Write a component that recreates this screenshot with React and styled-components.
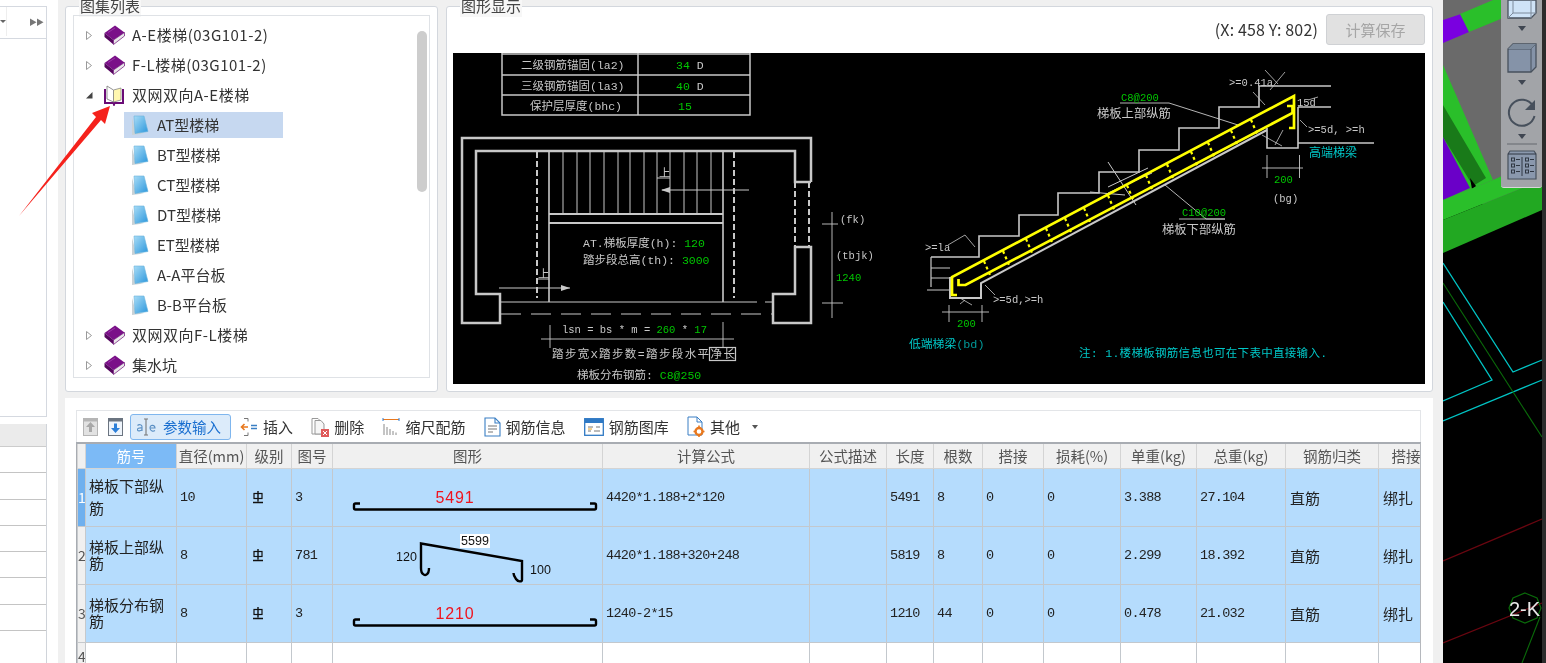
import React from "react";
import styled, { createGlobalStyle } from "styled-components";

const Global = createGlobalStyle`
  html, body { margin: 0; padding: 0; width: 1546px; height: 663px; overflow: hidden; background: #f0f0f0; }
  * { box-sizing: border-box; }
`;

const UI = `"Noto Sans CJK SC", "Liberation Sans", sans-serif`;
const CAD = `"Liberation Mono", "Noto Sans CJK SC", monospace`;

const Page = styled.div`
  position: relative; width: 1546px; height: 663px; display: flex; overflow: hidden;
  font-family: ${UI}; color: #333; background: #f0f0f0; filter: blur(0.4px);
`;

/* left strip */
const Strip = styled.aside`
  width: 58px; flex: none; background: #fff; padding-top: 6px; display: flex; flex-direction: column;
`;
const StripBar = styled.div`
  width: 47px; height: 33px; flex: none; border: 1px solid #d5d9e0; border-left: 0; display: flex; align-items: center; padding-bottom: 2px;
`;
const StripCaret = styled.span`
  width: 7px; height: 100%; border-right: 1px solid #eee; display: flex; align-items: center;
  &::before { content: ""; border: 3px solid transparent; border-top: 3px solid #666; margin: 3px 0 0 0; }
`;
const StripArrows = styled.span`
  margin-left: auto; margin-right: 3px; font-size: 8px; letter-spacing: -1px; color: #777; line-height: 1;
`;
const StripTree = styled.div`
  width: 47px; height: 378px; flex: none; border: 1px solid #d5d9e0; border-left: 0; border-top: 0;
`;
const StripGrid = styled.div`
  width: 47px; flex: 1; margin-top: 7px; border-right: 1px solid #d0d4da; display: flex; flex-direction: column;
`;
const StripHead = styled.div`height: 23px; flex: none; background: #ebebeb; border-bottom: 1px solid #ccc;`;
const StripRow = styled.div`height: 26.3px; flex: none; border-bottom: 1.5px solid #c4c4c4;`;

/* dialog */
const Main = styled.main`
  width: 1385px; flex: none; padding: 6px 10px 0 7px; display: flex; flex-direction: column; gap: 6px;
`;
const TopRow = styled.div`height: 386px; flex: none; display: flex; gap: 8px;`;
const Group = styled.section`
  position: relative; background: #fff; border: 1px solid #d3d7dd; border-radius: 3px;
  width: ${p => p.$width || "auto"}; flex: ${p => (p.$width ? "none" : 1)};
  display: flex; flex-direction: column;
`;
const Legend = styled.h3`
  position: absolute; top: -12px; left: 13px; margin: 0; padding: 0 1px; background: #f7f7f7;
  font-size: 15px; font-weight: 400; line-height: 22px; color: #444;
`;
const TreeBox = styled.div`
  position: relative; margin: 8px 7px 13px; flex: 1; border: 1px solid #dfe2e6; padding-top: 4px; overflow: hidden;
`;
const TreeRow = styled.div`
  height: 30px; display: flex; align-items: center; padding-left: ${p => (p.$child ? "50px" : "11px")};
`;
const CaretSlot = styled.span`width: 19px; flex: none; display: flex; align-items: center;`;
const IconSlot = styled.span`width: ${p => p.$w}px; flex: none; display: flex; align-items: center;`;
const TreeLabel = styled.span`
  font-size: 15px; line-height: 26px; color: #333; white-space: nowrap; letter-spacing: ${p => (p.$wide ? "0.5px" : "0")};
`;
const ChildPill = styled.div`
  width: 159px; height: 26px; display: flex; align-items: center; padding-left: 7px;
  background: ${p => (p.$on ? "#c6d8f0" : "transparent")};
`;
const Thumb = styled.div`
  position: absolute; right: 2px; top: 15px; width: 10px; height: 161px; border-radius: 5px; background: #cdcdcd;
`;

const CoordBar = styled.div`
  height: 46px; flex: none; display: flex; align-items: center; justify-content: flex-end; gap: 8px; padding: 0 7px 2px 0;
`;
const Coord = styled.span`font-size: 16px; letter-spacing: 0.15px; color: #333; white-space: nowrap;`;
const SaveBtn = styled.button`
  width: 99px; height: 31px; background: #e1e1e1; border: 1px solid #cfd1d4; border-radius: 3px; padding: 0;
  font: 400 15px ${UI}; color: #a6a6a6;
`;
const Canvas = styled.svg`
  display: block; width: 972px; height: 331px; margin-left: 6px; flex: none; background: #000;
`;
const CadLabel = styled.text`
  font-family: ${CAD}; font-size: ${p => p.$size || 11.5}px; fill: ${p => p.$c || "#c8c8c8"};
`;

/* lower panel */
const Lower = styled.section`
  flex: 1; min-height: 0; background: #fff; padding: 12px 12px 0 11px; display: flex; flex-direction: column;
`;
const Toolbar = styled.div`
  height: 32px; flex: none; border: 1px solid #e3e5e8; border-bottom: 0; display: flex; align-items: center; gap: 18.2px; padding-left: 6px;
`;
const Nav = styled.div`display: flex; align-items: center; gap: 10px; margin-right: -11.2px;`;
const ActiveBtn = styled.div`
  width: 101px; height: 26px; display: flex; align-items: center; gap: 7px; padding-left: 5px; margin-right: -9.2px;
  background: #dcebfa; border: 1px solid #7fb6ee; border-radius: 3px;
  font-size: 14.5px; color: #1a6fd0;
`;
const ToolItem = styled.div`
  display: flex; align-items: center; gap: 5px; font-size: 15px; color: #333; white-space: nowrap;
`;
const DownTri = styled.span`
  width: 0; height: 0; margin-left: 7px; border: 3px solid transparent; border-top: 4px solid #555; margin-top: 4px;
`;

const GridWrap = styled.div`
  flex: 1; min-height: 0; overflow: hidden; border-top: 2px solid #a8acb2; border-left: 1px solid #a8acb2; border-right: 1px solid #b5b8bd;
`;
const Table = styled.table`
  table-layout: fixed; width: 1385px; border-collapse: collapse;
`;
const Th = styled.th`
  height: 24px; padding: 0; overflow: hidden; white-space: nowrap; font-size: 14.5px; font-weight: 400; text-align: center;
  color: ${p => (p.$on ? "#fff" : "#555")}; background: ${p => (p.$on ? "#7cbaf6" : "#f0f0f0")};
  border: 1px solid #d4d4d4; border-top: 0;
`;
const Tr = styled.tr`height: ${p => p.$h}px; background: ${p => (p.$on ? "#b5dcfd" : "#fff")};`;
const RowHead = styled.td`
  padding: ${p => (p.$top ? "6px 0 0" : "0")}; vertical-align: ${p => (p.$top ? "top" : "middle")};
  text-align: center; font-size: 14px; line-height: 1; overflow: hidden;
  color: ${p => (p.$on ? "#fff" : "#555")}; background: ${p => (p.$on ? "#6fb0ee" : "#f0f0f0")};
  border: 1px solid #c6c9cc;
`;
const Td = styled.td`
  padding: 0 3px; border: 1px solid #c3c8cd; vertical-align: middle; white-space: nowrap; overflow: hidden;
  font-family: ${CAD}; font-size: 13.5px; letter-spacing: -0.7px; color: #222;
`;
const NameCell = styled(Td)`
  white-space: normal; font-family: ${UI}; font-size: 15px; letter-spacing: 0; line-height: ${p => (p.$tight ? "16px" : "22px")}; color: #222;
`;
const CnCell = styled(Td)`font-family: ${UI}; font-size: 15px; letter-spacing: 0; padding-left: 4px;`;
const ShapeCell = styled(Td)`padding: 0; letter-spacing: 0;`;

const ViewportWrap = styled.div`position: relative; width: 103px; flex: none; background: #000;`;
const ViewSvg = styled.svg`display: block; width: 103px; height: 663px;`;
const ViewBar = styled.div`
  position: absolute; left: 58px; top: 0; width: 41px; height: 188px; background: #a2a4a8;
  border-bottom: 1px solid #d8d8d8; border-radius: 0 0 3px 3px;
  display: flex; flex-direction: column; align-items: center;
`;
const ViewTri = styled.span`
  width: 0; flex: none; border: 4px solid transparent; border-top: 5px solid #3f4651; margin: 7px 0 0; height: 9px;
`;
const ViewSep = styled.span`width: 30px; height: 2px; background: #83868b; margin: 0 0 5px;`;
const ArrowOverlay = styled.svg`position: absolute; left: 0; top: 0; pointer-events: none;`;

/* ---------- icons ---------- */
const Closed = () => (
  <svg width="8" height="11" viewBox="0 0 8 11"><path d="M1.5 1.5 6.5 5.5 1.5 9.5Z" fill="#fff" stroke="#9a9a9a" /></svg>
);
const Opened = () => (
  <svg width="8" height="8" viewBox="0 0 8 8"><path d="M7.5 1V7.5H1Z" fill="#444" /></svg>
);
const Book = () => (
  <svg width="21" height="20" viewBox="0 0 21 20">
    <path d="M0.5 8 11 .5 20.5 7.5 9.5 15Z" fill="#7a1088" />
    <path d="M.5 8 .5 12 9.5 19.5 9.5 15Z" fill="#55065f" />
    <path d="M9.5 15 20.5 7.5 20.5 11 9.5 19.5Z" fill="#e8e8e8" stroke="#6a0c76" strokeWidth=".7" />
    <path d="M4 7.5 11 3" stroke="#9a38a8" />
  </svg>
);
const OpenBook = () => (
  <svg width="20" height="21" viewBox="0 0 20 21">
    <path d="M1 4V18H9.5L10 19.5 10.5 18H19V4" fill="none" stroke="#6a0c76" strokeWidth="2" />
    <path d="M3 1 9.5 5V17L3 14Z" fill="#fff" stroke="#777" strokeWidth=".8" />
    <path d="M9.5 5 17 3V15L9.5 17Z" fill="#fff7b0" stroke="#888" strokeWidth=".8" />
  </svg>
);
const Sheet = () => (
  <svg width="18" height="21" viewBox="0 0 18 21">
    <defs><linearGradient id="sh" x1="0" x2="1" y1="0" y2="1"><stop offset="0" stopColor="#a8dcf6" /><stop offset="1" stopColor="#2a96dc" /></linearGradient></defs>
    <path d="M1 3V20L13 18.5 5 17.5Z" fill="#c9d2d6" />
    <path d="M3 1H13L17 16.5 4 18.5Z" fill="url(#sh)" stroke="#6ab4dc" strokeWidth=".6" />
  </svg>
);
const Up = ({ down }) => (
  <svg width="15" height="18" viewBox="0 0 15 18">
    <rect x=".5" y=".5" width="14" height="17" fill={down ? "#eef4fb" : "#e2e2e2"} stroke={down ? "#6b7480" : "#b5b5b5"} />
    <rect x=".5" y=".5" width="14" height="3" fill={down ? "#6b7480" : "#b5b5b5"} />
    {down
      ? <path d="M7.5 15 3 10H6V5.5H9V10H12Z" fill="#2c7fd8" />
      : <path d="M7.5 4 12 9H9V14H6V9H3Z" fill="#a8a8a8" />}
  </svg>
);
const IconParam = () => (
  <svg width="20" height="20" viewBox="0 0 20 20" fill="none" stroke="#5a8fc4" strokeWidth="1.1">
    <path d="M1.5 8.5C3 7 6 7.500 6 9.5V14M6 11C3 10.500 1 11.500 1.500 13C2 14.500 5 14 6 12.500" />
    <path d="M8 2H12M10 2V18M8 18H12" stroke="#777" />
    <path d="M14 11H19C19 8 14 7 14 11C14 14.500 17.500 14.500 19 13.500" />
  </svg>
);
const IconInsert = () => (
  <svg width="18" height="20" viewBox="0 0 18 20" fill="none">
    <path d="M4 1.500H8V4.500M4 18.500H8V15.500" stroke="#777" />
    <path d="M8 10H1.500M4.500 7 1.500 10 4.500 13" stroke="#e8781e" strokeWidth="1.6" />
    <path d="M11 8.500H17M11 11.500H17" stroke="#3a7fc4" strokeWidth="1.4" />
  </svg>
);
const IconDelete = () => (
  <svg width="18" height="20" viewBox="0 0 18 20" fill="none">
    <path d="M1 1.500H7L11 5.500V17H1Z" fill="#fff" stroke="#999" />
    <path d="M4 3.500H10L13 7V17H4Z" fill="#f6f6f6" stroke="#999" />
    <rect x="10" y="12" width="8" height="8" fill="#e05a5a" />
    <path d="M12 14 16 18M16 14 12 18" stroke="#fff" />
  </svg>
);
const IconScale = () => (
  <svg width="18" height="20" viewBox="0 0 18 20" fill="none" stroke="#8a8a8a">
    <path d="M1 2.500H17" stroke="#e8781e" />
    <path d="M1 1V4M17 1V4" stroke="#2c7fd8" />
    <path d="M2 7V18M5 10V18M8 12V18M11 14V18M14 15.500V18" />
  </svg>
);
const IconInfo = () => (
  <svg width="17" height="20" viewBox="0 0 17 20" fill="none" stroke="#3a7fc4" strokeWidth="1.1">
    <path d="M1 1H11L16 6V19H1Z" />
    <path d="M11 1V6H16" />
    <path d="M4 9H13M4 12H13M4 15H9" stroke="#777" />
  </svg>
);
const IconLib = () => (
  <svg width="20" height="18" viewBox="0 0 20 18" fill="none">
    <rect x=".7" y=".7" width="18.600" height="16.600" stroke="#2f79c4" strokeWidth="1.300" />
    <rect x="1" y="1" width="18" height="4" fill="#2f79c4" />
    <path d="M4 9H9M4 13H7M12 9H16M10 13H16" stroke="#777" />
    <path d="M4 11H8" stroke="#e8a21e" />
  </svg>
);
const IconOther = () => (
  <svg width="18" height="21" viewBox="0 0 18 21" fill="none">
    <path d="M1 1H10L15 6V19H1Z" fill="#fff" stroke="#3a7fc4" />
    <path d="M10 1V6H15" stroke="#3a7fc4" />
    <circle cx="12" cy="15.500" r="3.500" stroke="#e8781e" strokeWidth="2.400" fill="#fff" />
    <path d="M12 9.500V11M12 20V21.500M6.500 15.500H8M16 15.500H17.500" stroke="#e8781e" strokeWidth="1.600" />
  </svg>
);
const Grade = () => (
  <svg width="12" height="14" viewBox="0 0 12 14" style={{ display: "block", marginLeft: 2 }} fill="none" stroke="#111">
    <rect x="2" y="3.500" width="8" height="5" strokeWidth="1.200" />
    <path d="M6 1V11.500M1 12.500H11" strokeWidth="1.400" />
  </svg>
);

/* ---------- rebar shapes ---------- */
const BarShape = ({ value }) => (
  <svg width="270" height="57" viewBox="0 0 270 57" style={{ display: "block" }}>
    <path d="M27 34.500H22.500Q21 34.500 21 36V39Q21 40.500 22.500 40.500H261.500Q263 40.500 263 39V36Q263 34.500 261.500 34.500H257" fill="none" stroke="#000" strokeWidth="2.400" />
    <text x="122" y="34" textAnchor="middle" fontFamily="Liberation Sans" fontSize="16" letterSpacing=".8" fill="#f0141e">{value}</text>
  </svg>
);
const BentShape = () => (
  <svg width="270" height="57" viewBox="0 0 270 57" style={{ display: "block" }}>
    <path d="M96 41C96 48 92 49 90 47 88.500 46 88 44 88 41V16.500L189 34V53C189 55 185 55 183 52 181.500 50 180.500 48 180.500 46" fill="none" stroke="#000" strokeWidth="2.400" />
    <rect x="127" y="7" width="30" height="14" fill="#fff" />
    <g fontFamily="Liberation Sans" fontSize="12.500" fill="#111">
      <text x="142" y="18" textAnchor="middle">5599</text>
      <text x="63" y="34">120</text>
      <text x="197" y="47">100</text>
    </g>
  </svg>
);

/* ---------- CAD drawing ---------- */
const G = "#00c800";
const C = "#00c8c8";
const W = "#c8c8c8";
const treadXs = [563, 577, 590, 604, 618, 630, 644, 657, 670, 684, 697, 711];

const slopeY = (x) => 277 + (x - 952) * (96 - 277) / (1294 - 952);
const slopeX = [984, 1003, 1026, 1046, 1065, 1084, 1108, 1127, 1146, 1167, 1191, 1208, 1231, 1251];

const PlanView = () => (
  <g>
    <g fill="none" stroke={W}>
      <path d="M502 53V115H750V53M502 54H750M502 75H750M502 95H750M638 53V115" strokeWidth="1.500" />
      <path d="M811 182V138H462V323H500V294H476V151H795V182H811" strokeWidth="2.500" />
      <path d="M811 247H795V294H773V323H811Z" strokeWidth="2.500" />
      <path d="M795 182V247M809 182V247M537 152V298M734 152V298" strokeWidth="2" strokeDasharray="6 3" />
      <path d="M549 151V302M723 151V302" strokeWidth="1.600" />
      {treadXs.map(x => <path key={x} d={`M${x} 151V214`} strokeWidth="1" />)}
      <path d="M549 214H723M549 223H723" strokeWidth="1.800" />
      <path d="M501 302H757M765 302H773" strokeWidth="1.200" />
      <path d="M501 314H772" strokeWidth="1.200" strokeDasharray="20 10" />
      <path d="M749 190H662M499 288H570M657 178H670M538 279H549" strokeWidth="1" />
      <path d="M541 339H734M550 325V348M723 322V347M832 212V318M822 224H838M822 303H843" strokeWidth=".9" />
      <rect x="709.500" y="347.500" width="26" height="13" strokeWidth="1.200" />
    </g>
    <path d="M661 190 670 187V193ZM570 288 561 285V291Z" fill={W} />
    <CadLabel x="521" y="69">二级钢筋锚固(la2)</CadLabel>
    <CadLabel x="676" y="69" $c={G}>34 <tspan fill={W}>D</tspan></CadLabel>
    <CadLabel x="521" y="90">三级钢筋锚固(la3)</CadLabel>
    <CadLabel x="676" y="90" $c={G}>40 <tspan fill={W}>D</tspan></CadLabel>
    <CadLabel x="530" y="110">保护层厚度(bhc)</CadLabel>
    <CadLabel x="678" y="110" $c={G}>15</CadLabel>
    <CadLabel x="659" y="177">上</CadLabel>
    <CadLabel x="538" y="278">上</CadLabel>
    <CadLabel x="583" y="247">AT.梯板厚度(h): <tspan fill={G}>120</tspan></CadLabel>
    <CadLabel x="583" y="264">踏步段总高(th): <tspan fill={G}>3000</tspan></CadLabel>
    <CadLabel x="562" y="333" $size={10.5}>lsn = bs * m = <tspan fill={G}>260</tspan> * <tspan fill={G}>17</tspan></CadLabel>
    <CadLabel x="552" y="358" letterSpacing="1.400">踏步宽X踏步数=踏步段水平净长</CadLabel>
    <CadLabel x="577" y="379">梯板分布钢筋: <tspan fill={G}>C8@250</tspan></CadLabel>
    <CadLabel x="840" y="223" $size={10.5}>(fk)</CadLabel>
    <CadLabel x="836" y="259" $size={10.5}>(tbjk)</CadLabel>
    <CadLabel x="836" y="281" $c={G} $size={10.5}>1240</CadLabel>
  </g>
);

const SectionView = () => (
  <g>
    <g fill="none" stroke={W}>
      <path d="M931 257H979V236H1019V215H1058V193H1099V172H1139V150H1179V128H1219V107H1259V86H1331M1298 107H1331" strokeWidth="1.600" />
      <path d="M931 257V287M931 278H950M927 290H950M931 268H950" strokeWidth="1.200" />
      <path d="M1298 107V148H1267V128M1298 143H1374" strokeWidth="1.600" />
      <path d="M950 277V298H981V283L1267 130" strokeWidth="2" />
      <path d="M1120 103H1169L1238 125M1179 219H1225L1206 219 1165 185" strokeWidth=".9" />
      <path d="M1262 168H1303M1267 155V178M1299.500 155V178M942 312H989M949 305V322M982 305V322" strokeWidth=".9" />
      <path d="M1108 187 1148 168M1108 193 1152 173M1108 162 1136 205M1125 195 1090 192" strokeWidth="1" />
      <path d="M1265 70 1278 84M1270 90 1285 72M1253 92 1265 105M1283 130 1275 145 M1262 135 1282 146M948 245 965 235 975 247M965 300 960 304M985 285 995 295M960 298 972 305M1300 120 1307 127M1308 100 1318 97" strokeWidth=".8" />
    </g>
    <g fill="none" stroke="#ffff00" strokeWidth="2.700">
      <path d="M957 295H952V277L1294 96V128H1289" />
      <path d="M958.500 279V285H965.500L1292.500 113V106H1287" />
      {slopeX.map((x, i) => (
        <path key={x} d={`M${x} ${slopeY(x) + 1}L${x + 6} ${slopeY(x) + 15}`} strokeWidth="2.200" strokeDasharray="3 3" />
      ))}
    </g>
    <CadLabel x="1121" y="101" $c={G} $size={10.5}>C8@200</CadLabel>
    <CadLabel x="1097" y="118" $size={12.300}>梯板上部纵筋</CadLabel>
    <CadLabel x="1182" y="216" $c={G} $size={10.5}>C10@200</CadLabel>
    <CadLabel x="1162" y="234" $size={12.300}>梯板下部纵筋</CadLabel>
    <CadLabel x="1229" y="86" $size={10.5}>&gt;=0.41a</CadLabel>
    <CadLabel x="1297" y="106" $size={10.5}>15d</CadLabel>
    <CadLabel x="1308" y="133" $size={10.5}>&gt;=5d, &gt;=h</CadLabel>
    <CadLabel x="1309" y="157" $c={C} $size={12}>高端梯梁</CadLabel>
    <CadLabel x="1274" y="183" $c={G} $size={10.5}>200</CadLabel>
    <CadLabel x="1273" y="202" $size={10.5}>(bg)</CadLabel>
    <CadLabel x="925" y="251" $size={10.5}>&gt;=la</CadLabel>
    <CadLabel x="993" y="303" $size={10.5}>&gt;=5d,&gt;=h</CadLabel>
    <CadLabel x="957" y="327" $c={G} $size={10.5}>200</CadLabel>
    <CadLabel x="909" y="348" $c={C} $size={11.8}>低端梯梁<tspan fill="#009a9a">(bd)</tspan></CadLabel>
    <CadLabel x="1079" y="357" $c={C} letterSpacing=".3">注: 1.楼梯板钢筋信息也可在下表中直接输入.</CadLabel>
  </g>
);

/* ---------- viewport ---------- */
const Scene = () => (
  <ViewSvg viewBox="1443 0 103 663">
    <rect x="1443" y="0" width="103" height="663" fill="#000" />
    <path d="M1443 0H1542V210L1443 200Z" fill="#6a6a6a" />
    <path d="M1443 20 1461 14 1469 32 1443 43Z" fill="#7a00e0" />
    <path d="M1460 14 1493 0H1542V2L1469 32Z" fill="#2abf2a" />
    <path d="M1443 65 1493 180 1443 200Z" fill="#2abf2a" />
    <path d="M1443 105 1486 178 1473 186 1443 137Z" fill="#197a19" />
    <path d="M1443 137 1470 188 1443 200Z" fill="#6a00c8" />
    <path d="M1470 178 1476 186 1472 189Z" fill="#000" />
    <path d="M1443 200 1493 180 1542 158V180L1443 220Z" fill="#2abf2a" />
    <path d="M1443 220 1542 180V210L1443 253Z" fill="#22a822" />
    <g fill="none" stroke="#00c4c4" strokeWidth="1.300">
      <path d="M1443 263 1513 372 1542 360" />
      <path d="M1443 302 1492 380 1443 401" />
      <path d="M1443 421 1542 380" />
    </g>
    <path d="M1443 283 1542 437" stroke="#0a6a0a" strokeWidth="1.100" />
    <path d="M1443 561 1542 519M1443 643 1542 603" stroke="#6a0610" strokeWidth="1.300" />
    <path d="M1525 593 1537 598 1541 608 1537 618 1525 623 1513 618 1509 608 1513 598Z" fill="none" stroke="#0a6a0a" strokeWidth="1.200" />
    <path d="M1540 617 1522 663" stroke="#0a6a0a" strokeWidth="1.100" />
    <text x="1509" y="616" fontFamily="Liberation Sans" fontSize="20" fill="#e8e8e8">2-K</text>
    <rect x="1542" y="0" width="4" height="663" fill="#2c2c2c" />
  </ViewSvg>
);

const CubeA = () => (
  <svg width="30" height="19" viewBox="0 0 30 19" style={{ flex: "none" }}>
    <path d="M1 0V18H24L29 13V0Z" fill="#cfe3f7" stroke="#4a525e" strokeWidth="1.300" />
    <path d="M6 0V13H29M6 13 1 18M24 0V18" fill="none" stroke="#7c8a9b" />
  </svg>
);
const CubeB = () => (
  <svg width="30" height="30" viewBox="0 0 30 30" style={{ flex: "none", marginTop: 8 }}>
    <path d="M1 6 6 1H29V24L24 29H1Z" fill="#8593a8" stroke="#47505c" strokeWidth="1.300" />
    <path d="M1 6H24V29M24 6 29 1" fill="none" stroke="#47505c" />
    <path d="M1 6 6 1H29L24 6Z" fill="#7c8a9b" />
  </svg>
);
const Rotate = () => (
  <svg width="30" height="30" viewBox="0 0 30 30" style={{ flex: "none", marginTop: 8 }} fill="none">
    <path d="M26 9A13 13 0 1 0 27.500 19" stroke="#47505c" strokeWidth="2" />
    <path d="M28 3V13H18Z" fill="#47505c" />
  </svg>
);
const Checklist = () => (
  <svg width="30" height="30" viewBox="0 0 30 30" style={{ flex: "none" }}>
    <path d="M1 4 3 1H27L29 4V29H1Z" fill="#8a98ad" stroke="#47505c" strokeWidth="1.200" />
    <path d="M1 4H29M15 7V26" stroke="#2f3742" />
    {[8, 14, 20].map(y => (
      <g key={y} fill="none" stroke="#2f3742">
        <rect x="4.500" y={y} width="3" height="3" />
        <rect x="18.500" y={y} width="3" height="3" />
        <path d={`M9 ${y + 1.500}H13M23 ${y + 1.500}H27`} />
      </g>
    ))}
  </svg>
);

/* ---------- data ---------- */
const books = ["A-E楼梯(03G101-2)", "F-L楼梯(03G101-2)"];
const kids = ["AT型楼梯", "BT型楼梯", "CT型楼梯", "DT型楼梯", "ET型楼梯", "A-A平台板", "B-B平台板"];
const cols = [
  ["", 8], ["筋号", 91], ["直径(mm)", 70], ["级别", 45], ["图号", 41], ["图形", 270], ["计算公式", 207], ["公式描述", 77],
  ["长度", 47], ["根数", 49], ["搭接", 61], ["损耗(%)", 77], ["单重(kg)", 76], ["总重(kg)", 89], ["钢筋归类", 93], ["搭接形式", 84],
];
const rows = [
  { no: 1, h: 58, name: "梯板下部纵筋", d: "10", fig: "3", shape: <BarShape value="5491" />, f: "4420*1.188+2*120", len: "5491", n: "8", w: "3.388", t: "27.104" },
  { no: 2, h: 57, name: "梯板上部纵筋", d: "8", fig: "781", shape: <BentShape />, f: "4420*1.188+320+248", len: "5819", n: "8", w: "2.299", t: "18.392" },
  { no: 3, h: 58, name: "梯板分布钢筋", d: "8", fig: "3", shape: <BarShape value="1210" />, f: "1240-2*15", len: "1210", n: "44", w: "0.478", t: "21.032" },
];

export default function App() {
  return (
    <Page>
      <Global />
      <Strip>
        <StripBar><StripCaret /><StripArrows>▶▶</StripArrows></StripBar>
        <StripTree />
        <StripGrid>
          <StripHead />
          {Array.from({ length: 7 }).map((_, i) => <StripRow key={i} />)}
        </StripGrid>
      </Strip>

      <Main>
        <TopRow>
          <Group $width="373px">
            <Legend>图集列表</Legend>
            <TreeBox>
              {books.map(b => (
                <TreeRow key={b}>
                  <CaretSlot><Closed /></CaretSlot>
                  <IconSlot $w={28}><Book /></IconSlot>
                  <TreeLabel $wide>{b}</TreeLabel>
                </TreeRow>
              ))}
              <TreeRow>
                <CaretSlot><Opened /></CaretSlot>
                <IconSlot $w={28}><OpenBook /></IconSlot>
                <TreeLabel $wide>双网双向A-E楼梯</TreeLabel>
              </TreeRow>
              {kids.map((k, i) => (
                <TreeRow key={k} $child>
                  <ChildPill $on={i === 0}>
                    <IconSlot $w={26}><Sheet /></IconSlot>
                    <TreeLabel>{k}</TreeLabel>
                  </ChildPill>
                </TreeRow>
              ))}
              <TreeRow>
                <CaretSlot><Closed /></CaretSlot>
                <IconSlot $w={28}><Book /></IconSlot>
                <TreeLabel $wide>双网双向F-L楼梯</TreeLabel>
              </TreeRow>
              <TreeRow>
                <CaretSlot><Closed /></CaretSlot>
                <IconSlot $w={28}><Book /></IconSlot>
                <TreeLabel>集水坑</TreeLabel>
              </TreeRow>
              <Thumb />
            </TreeBox>
          </Group>

          <Group>
            <Legend>图形显示</Legend>
            <CoordBar>
              <Coord>(X: 458 Y: 802)</Coord>
              <SaveBtn disabled>计算保存</SaveBtn>
            </CoordBar>
            <Canvas viewBox="453 53 972 331">
              <PlanView />
              <SectionView />
            </Canvas>
          </Group>
        </TopRow>

        <Lower>
          <Toolbar>
            <Nav><Up /><Up down /></Nav>
            <ActiveBtn><IconParam />参数输入</ActiveBtn>
            <ToolItem><IconInsert />插入</ToolItem>
            <ToolItem><IconDelete />删除</ToolItem>
            <ToolItem><IconScale />缩尺配筋</ToolItem>
            <ToolItem><IconInfo />钢筋信息</ToolItem>
            <ToolItem><IconLib />钢筋图库</ToolItem>
            <ToolItem><IconOther />其他<DownTri /></ToolItem>
          </Toolbar>
          <GridWrap>
            <Table>
              <colgroup>{cols.map(([h, w], i) => <col key={i} style={{ width: w }} />)}</colgroup>
              <thead>
                <tr>{cols.map(([h], i) => <Th key={i} $on={i === 1}>{h}</Th>)}</tr>
              </thead>
              <tbody>
                {rows.map(r => (
                  <Tr key={r.no} $on $h={r.h}>
                    <RowHead $on={r.no === 1}>{r.no}</RowHead>
                    <NameCell $tight={r.no > 1}>{r.name}</NameCell>
                    <Td>{r.d}</Td>
                    <Td><Grade /></Td>
                    <Td>{r.fig}</Td>
                    <ShapeCell>{r.shape}</ShapeCell>
                    <Td>{r.f}</Td>
                    <Td />
                    <Td>{r.len}</Td>
                    <Td>{r.n}</Td>
                    <Td>0</Td>
                    <Td>0</Td>
                    <Td>{r.w}</Td>
                    <Td>{r.t}</Td>
                    <CnCell>直筋</CnCell>
                    <CnCell>绑扎</CnCell>
                  </Tr>
                ))}
                <Tr $h={58}>
                  <RowHead $top>4</RowHead>
                  {cols.slice(1).map((_, i) => <Td key={i} />)}
                </Tr>
              </tbody>
            </Table>
          </GridWrap>
        </Lower>
      </Main>

      <ViewportWrap>
        <Scene />
        <ViewBar>
          <CubeA />
          <ViewTri />
          <CubeB />
          <ViewTri />
          <Rotate />
          <ViewTri />
          <ViewSep />
          <Checklist />
        </ViewBar>
      </ViewportWrap>

      <ArrowOverlay width="130" height="230" viewBox="0 0 130 230">
        <path d="M19 216 96 117 92 113 110 106 105 124 101 120Z" fill="#f5221c" />
      </ArrowOverlay>
    </Page>
  );
}
